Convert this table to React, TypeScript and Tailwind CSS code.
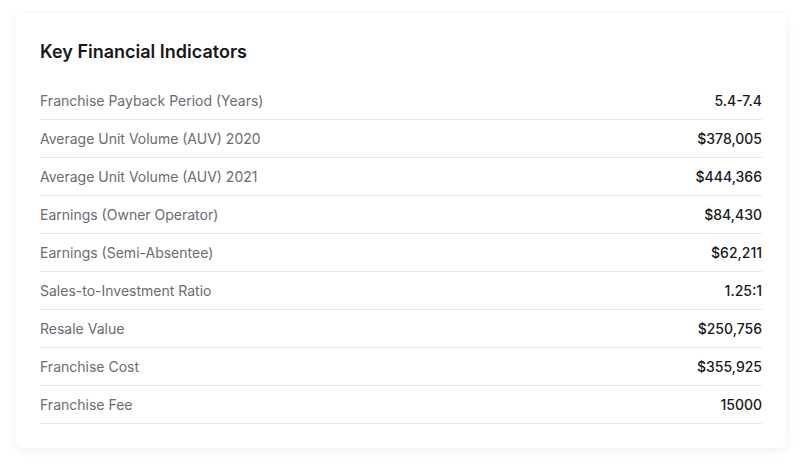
import React from "react";

const rows: [string, string][] = [
  ["Franchise Payback Period (Years)", "5.4-7.4"],
  ["Average Unit Volume (AUV) 2020", "$378,005"],
  ["Average Unit Volume (AUV) 2021", "$444,366"],
  ["Earnings (Owner Operator)", "$84,430"],
  ["Earnings (Semi-Absentee)", "$62,211"],
  ["Sales-to-Investment Ratio", "1.25:1"],
  ["Resale Value", "$250,756"],
  ["Franchise Cost", "$355,925"],
  ["Franchise Fee", "15000"],
];

const App = () => {
  return (
    <div className="min-h-[465px] bg-white px-4 pt-[14px] font-['Inter',sans-serif]">
      <div className="rounded-md bg-white p-6 shadow-[0_2px_12px_rgba(0,0,0,0.07)]">
        <h2 className="mb-4 h-7 text-[18px] font-semibold leading-7 text-[#18181b]">
          Key Financial Indicators
        </h2>
        <div>
          {rows.map(([label, value]) => (
            <div
              key={label}
              className="flex h-[38px] items-center justify-between border-b border-[#e8e8ec] text-[14px]"
            >
              <span className="text-[#6b6b73]">{label}</span>
              <span className="font-medium text-[#18181b]">{value}</span>
            </div>
          ))}
        </div>
      </div>
    </div>
  );
};

export default App;
